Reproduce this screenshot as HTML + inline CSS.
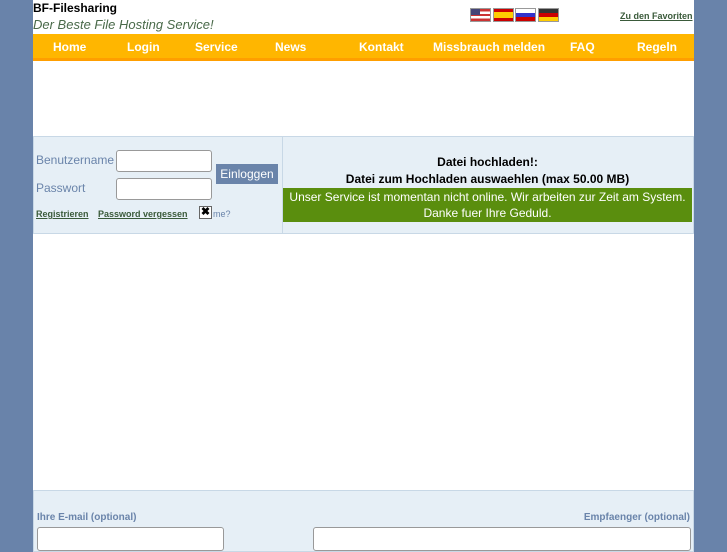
<!DOCTYPE html>
<html><head><style>
body{margin:0;background:#6983aa;font-family:"Liberation Sans",sans-serif;width:727px;height:545px;overflow:hidden;position:relative}
#p{position:absolute;left:33px;top:0;width:661px;height:545px;background:#fff}
.a{position:absolute}
.nav{left:0;top:34px;width:661px;height:24px;background:#ffb600;border-bottom:3px solid #ff9e00}
.nav span{position:absolute;top:6px;color:#fff;font-weight:bold;font-size:12px}
.flag{position:absolute;top:8px;width:19px;height:12px;border:1px solid #999}
input{position:absolute;border:1px solid #999;border-radius:3px;background:#fff;box-sizing:border-box}
</style></head><body>
<div id="p">
<div class="a" style="left:0;top:1px;font-size:12px;font-weight:bold;color:#000">BF-Filesharing</div>
<div class="a" style="left:0;top:17px;font-size:13px;font-style:italic;color:#4a6a4a">Der Beste File Hosting Service!</div>
<div class="flag" style="left:437px;background:linear-gradient(#c33 0 20%,#fff 20% 40%,#c33 40% 60%,#fff 60% 80%,#c33 80%);"><div style="width:9px;height:6px;background:#447"></div></div>
<div class="flag" style="left:460px;background:linear-gradient(#c00 0 25%,#fc0 25% 75%,#c00 75%)"></div>
<div class="flag" style="left:482px;background:linear-gradient(#fff 0 33%,#33c 33% 66%,#c00 66%)"></div>
<div class="flag" style="left:505px;background:linear-gradient(#333 0 33%,#c00 33% 66%,#fc0 66%)"></div>
<div class="a" style="left:587px;top:11px;font-size:9px;font-weight:bold;color:#3a5a3a;text-decoration:underline">Zu den Favoriten</div>
<div class="a nav">
<span style="left:20px">Home</span><span style="left:94px">Login</span><span style="left:162px">Service</span><span style="left:242px">News</span><span style="left:326px">Kontakt</span><span style="left:400px">Missbrauch melden</span><span style="left:537px">FAQ</span><span style="left:604px">Regeln</span></div>
<div class="a" style="left:0;top:136px;width:659px;height:96px;background:#e6eff6;border:1px solid #c8d8e6"></div>
<div class="a" style="left:249px;top:137px;width:1px;height:96px;background:#c8d8e6"></div>
<div class="a" style="left:3px;top:153px;font-size:12px;color:#6a84aa">Benutzername</div>
<div class="a" style="left:3px;top:181px;font-size:12px;color:#6a84aa">Passwort</div>
<input style="left:83px;top:150px;width:96px;height:22px">
<input style="left:83px;top:178px;width:96px;height:22px">
<div class="a" style="left:183px;top:164px;width:62px;height:20px;background:#6a84aa;color:#fff;font-size:12px;text-align:center;line-height:20px">Einloggen</div>
<div class="a" style="left:3px;top:209px;font-size:9px;font-weight:bold;color:#3a5a3a;text-decoration:underline">Registrieren</div>
<div class="a" style="left:65px;top:209px;font-size:9px;font-weight:bold;color:#3a5a3a;text-decoration:underline">Password vergessen</div>
<div class="a" style="left:166px;top:206px;width:11px;height:11px;border:1px solid #666;background:#fff;font-size:11px;line-height:11px;text-align:center;font-weight:bold">✖</div>
<div class="a" style="left:180px;top:209px;font-size:9px;color:#6a84aa">me?</div>
<div class="a" style="left:250px;top:155px;width:409px;text-align:center;font-size:12px;font-weight:bold;color:#000">Datei hochladen!:</div>
<div class="a" style="left:250px;top:172px;width:409px;text-align:center;font-size:12px;font-weight:bold;color:#000">Datei zum Hochladen auswaehlen (max 50.00 MB)</div>
<div class="a" style="left:250px;top:188px;width:409px;height:33px;background:#5a8e0e;color:#fff;font-size:12px;text-align:center;line-height:16px;padding-top:1px">Unser Service ist momentan nicht online. Wir arbeiten zur Zeit am System.<br>Danke fuer Ihre Geduld.</div>
<div class="a" style="left:0;top:490px;width:659px;height:60px;background:#e6eff6;border:1px solid #c8d8e6"></div>
<div class="a" style="left:4px;top:512px;font-size:10px;font-weight:bold;color:#6a84aa">Ihre E-mail (optional)</div>
<div class="a" style="right:4px;top:512px;font-size:10px;font-weight:bold;color:#6a84aa">Empfaenger (optional)</div>
<input style="left:4px;top:527px;width:187px;height:24px">
<input style="left:280px;top:527px;width:378px;height:24px">
</div>
</body></html>
